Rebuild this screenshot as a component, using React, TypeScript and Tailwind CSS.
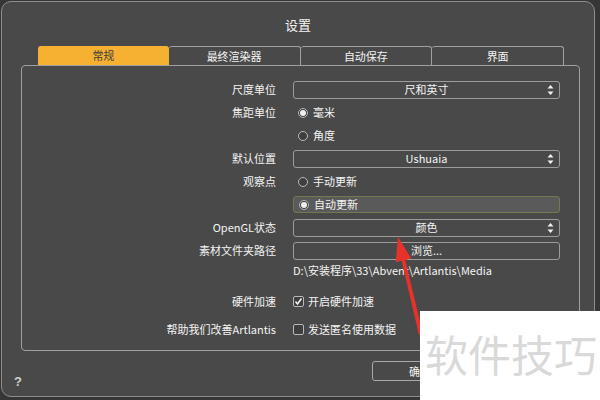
import React from 'react';

const font = { fontFamily: '"Noto Sans CJK SC", "Noto Sans", sans-serif' };

const SelectArrows: React.FC = () => (
    <svg width="7" height="11" viewBox="0 0 7 11" className="absolute right-[5px] top-1/2 -translate-y-1/2">
        <path d="M3.5 0.5L6.5 4H0.5z" fill="#f2f2f2" />
        <path d="M3.5 10.5L6.5 7H0.5z" fill="#f2f2f2" />
    </svg>
);

const Select: React.FC<{ value: string }> = ({ value }) => (
    <div className="relative h-[18px] w-[267px] rounded-[3px] border border-[#9c9c9c] flex items-center justify-center text-[11px] text-[#f4f4f4]">
        {value}
        <SelectArrows />
    </div>
);

const Radio: React.FC<{ checked?: boolean; label: string }> = ({ checked, label }) => (
    <div className="flex items-center pl-[5px] text-[11px] text-[#f4f4f4]">
        <span className="w-[10px] h-[10px] rounded-full border border-[#b9b9b9] bg-[#3e3e3e] flex items-center justify-center">
            {checked && <span className="w-[6px] h-[6px] rounded-full bg-[#f0f0f0]" />}
        </span>
        <span className="ml-[5px]">{label}</span>
    </div>
);

const Checkbox: React.FC<{ checked?: boolean; label: string }> = ({ checked, label }) => (
    <div className="flex items-center text-[11px] text-[#f4f4f4]">
        <span className="w-[11px] h-[11px] rounded-[2px] border border-[#b9b9b9] bg-[#3e3e3e] flex items-center justify-center">
            {checked && (
                <svg width="9" height="9" viewBox="0 0 9 9">
                    <path d="M1.5 4.5L3.5 7L7.5 1.5" stroke="#f4f4f4" strokeWidth="1.5" fill="none" />
                </svg>
            )}
        </span>
        <span className="ml-[4px]">{label}</span>
    </div>
);

const Row: React.FC<{ label?: string; h?: string; children?: React.ReactNode }> = ({ label, h = 'h-[23px]', children }) => (
    <div className={`flex items-center ${h}`}>
        <div className="w-[255px] text-right text-[11px] text-[#f4f4f4] pr-[1px] whitespace-nowrap">{label}</div>
        <div className="ml-[16px]">{children}</div>
    </div>
);

const tabs = ['常规', '最终渲染器', '自动保存', '界面'];

export default function App() {
    return (
        <div className="relative w-[600px] h-[400px] bg-[#363636] p-px overflow-hidden" style={font}>
            <div className="w-[594px] h-[396px] rounded-[10px] border border-[#8e8e8e] bg-[#494949] flex flex-col">
                <div className="h-[44px] pt-[14px] text-center text-[13px] leading-[18px] text-[#f4f4f4]">设置</div>

                {/* tabs */}
                <div className="ml-[36px] w-[526px] h-[19px] flex">
                    {tabs.map((t, i) => (
                        <div
                            key={t}
                            className={`flex-1 flex items-center justify-center text-[11px] rounded-t-[3px] ${
                                i === 0
                                    ? 'bg-[#f6b133] text-[#3d3d3d]'
                                    : 'border-t border-r border-[#a0a0a0] text-[#f4f4f4]'
                            }`}
                        >
                            {t}
                        </div>
                    ))}
                </div>

                {/* panel */}
                <div className="ml-[19px] w-[559px] h-[286px] rounded-[4px] border border-[#a0a0a0] pt-[12px]">
                    <Row label="尺度单位"><Select value="尺和英寸" /></Row>
                    <Row label="焦距单位"><Radio checked label="毫米" /></Row>
                    <Row><Radio label="角度" /></Row>
                    <Row label="默认位置"><Select value="Ushuaia" /></Row>
                    <Row label="观察点"><Radio label="手动更新" /></Row>
                    <Row>
                        <div className="w-[267px] h-[17px] rounded-[3px] border border-[#77774f] bg-[#5a5a5a] flex items-center">
                            <Radio checked label="自动更新" />
                        </div>
                    </Row>
                    <Row label="OpenGL状态"><Select value="颜色" /></Row>
                    <Row label="素材文件夹路径">
                        <div className="h-[18px] w-[267px] rounded-[3px] border border-[#9c9c9c] flex items-center justify-center text-[11px] text-[#f4f4f4]">
                            浏览...
                        </div>
                    </Row>
                    <Row h="h-[16px]">
                        <div className="text-[11px] text-[#f4f4f4] whitespace-nowrap">D:\安装程序\33\Abvent\Artlantis\Media</div>
                    </Row>
                    <div className="h-[12px]" />
                    <Row label="硬件加速" h="h-[22px]"><Checkbox checked label="开启硬件加速" /></Row>
                    <div className="h-[6px]" />
                    <Row label="帮助我们改善Artlantis" h="h-[22px]"><Checkbox label="发送匿名使用数据" /></Row>
                </div>

                {/* bottom */}
                <div className="flex-1 flex items-start">
                    <div className="ml-[12px] mt-[21px] text-[13px] font-bold text-[#d0d0d0]" style={{ fontFamily: '"Liberation Sans", sans-serif' }}>?</div>
                    <div className="ml-[350px] mt-[10px] w-[96px] h-[20px] rounded-[3px] border border-[#a9a9a9] flex items-center justify-center text-[11px] text-[#f4f4f4]">
                        确定
                    </div>
                </div>
            </div>

            {/* red arrow annotation */}
            <svg className="absolute left-0 top-0" width="600" height="400" viewBox="0 0 600 400">
                <polygon
                    points="398,237 411.3,258.6 405.2,259.9 423,334 419,335 401.6,260.8 395.7,262.2"
                    fill="#e6322b"
                />
            </svg>

            {/* watermark */}
            <div className="absolute left-[420px] top-[311px] right-0 bottom-0 bg-white">
                <div className="ml-[5px] mt-[16px] text-[43px] leading-[52px] text-[#d9d9d9] whitespace-nowrap">软件技巧</div>
            </div>
        </div>
    );
}
